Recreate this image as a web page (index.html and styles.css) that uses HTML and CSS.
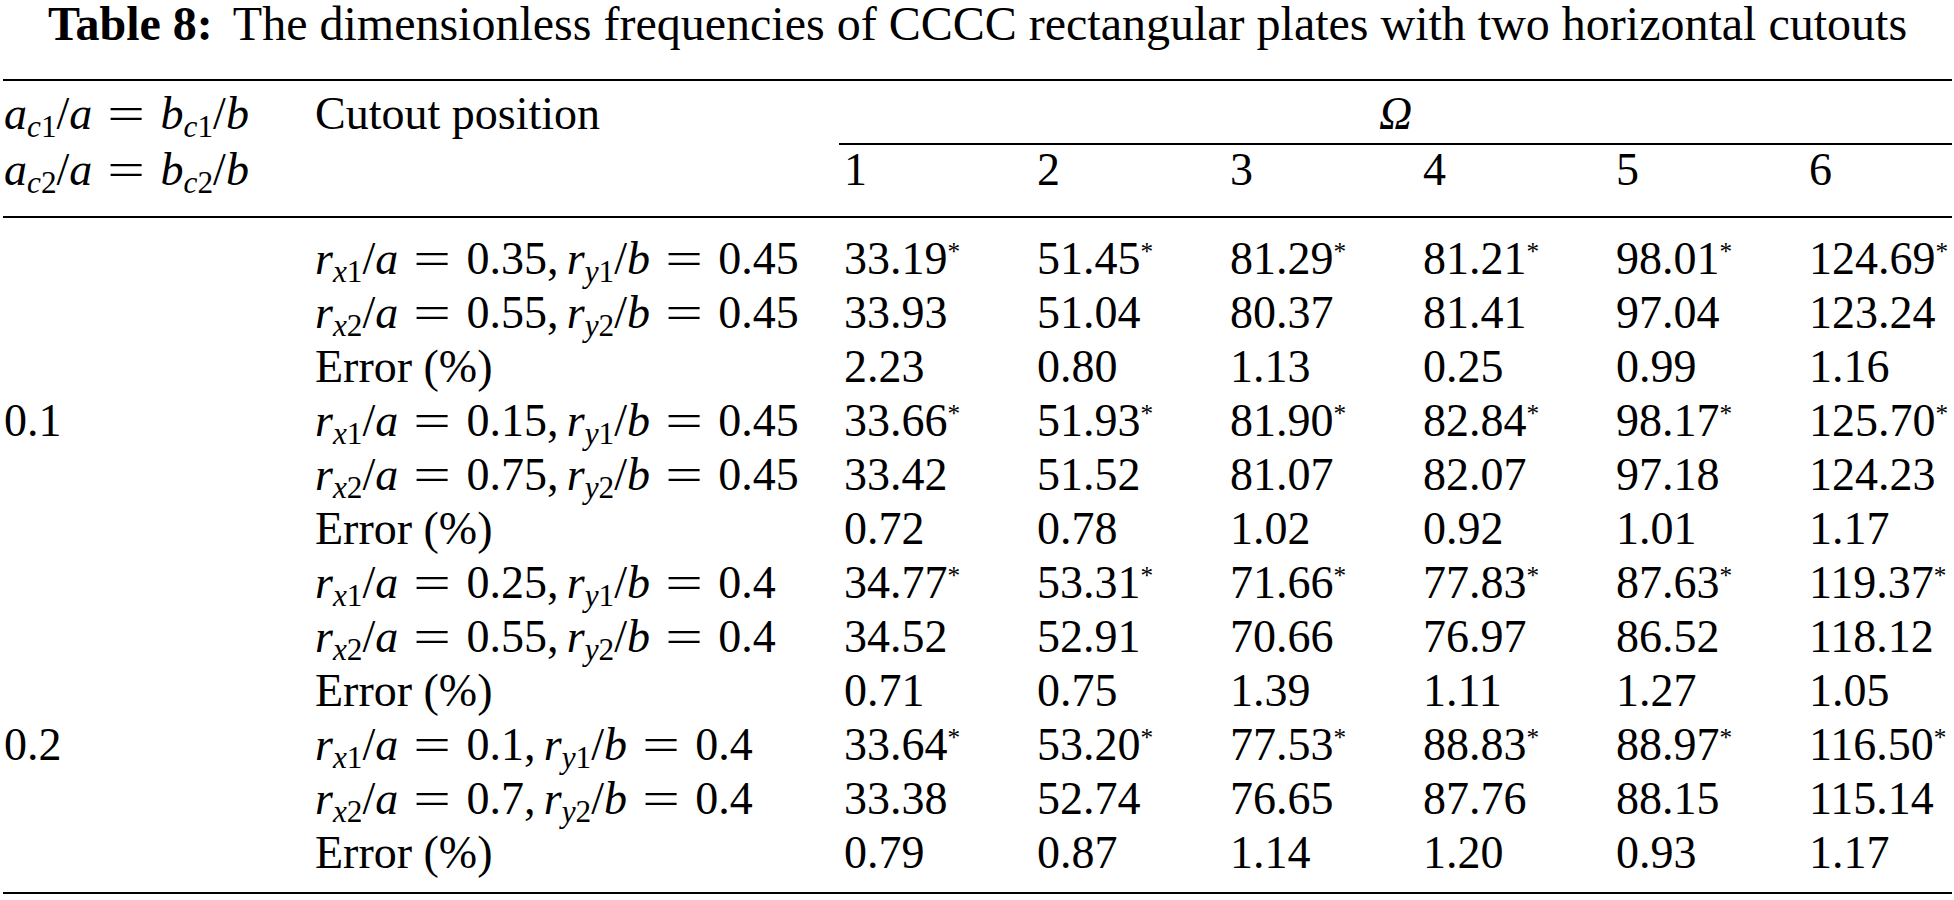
FILE: index.html
```html
<!DOCTYPE html>
<html>
<head>
<meta charset="utf-8">
<link rel="stylesheet" href="styles.css">
</head>
<body>
<div class="page">
  <div class="title"><b>Table 8:</b><span class="tgap"></span>The dimensionless frequencies of CCCC rectangular plates with two horizontal cutouts</div>
  <table class="tbl">
    <colgroup>
      <col class="c0"><col class="c1"><col class="cn"><col class="cn"><col class="cn"><col class="cn"><col class="cn"><col class="cl">
    </colgroup>
    <thead>
      <tr class="h1">
        <th class="m"><i>a</i><sub><i>c</i>1</sub>/<i>a</i><span class="eq"><span>=</span></span><i>b</i><sub><i>c</i>1</sub>/<i>b</i></th>
        <th>Cutout position</th>
        <th colspan="6" class="omega"><i>Ω</i></th>
      </tr>
      <tr class="h2">
        <th class="m"><i>a</i><sub><i>c</i>2</sub>/<i>a</i><span class="eq"><span>=</span></span><i>b</i><sub><i>c</i>2</sub>/<i>b</i></th>
        <th></th>
        <th class="n">1</th><th class="n">2</th><th class="n">3</th><th class="n">4</th><th class="n">5</th><th class="n">6</th>
      </tr>
    </thead>
    <tbody>
      <tr class="first">
        <td></td>
        <td class="m"><i>r</i><sub><i>x</i>1</sub>/<i>a</i><span class="eq"><span>=</span></span>0.35,<span class="thin"></span><i>r</i><sub><i>y</i>1</sub>/<i>b</i><span class="eq"><span>=</span></span>0.45</td>
        <td class="n">33.19<sup>*</sup></td><td class="n">51.45<sup>*</sup></td><td class="n">81.29<sup>*</sup></td><td class="n">81.21<sup>*</sup></td><td class="n">98.01<sup>*</sup></td><td class="n">124.69<sup>*</sup></td>
      </tr>
      <tr>
        <td></td>
        <td class="m"><i>r</i><sub><i>x</i>2</sub>/<i>a</i><span class="eq"><span>=</span></span>0.55,<span class="thin"></span><i>r</i><sub><i>y</i>2</sub>/<i>b</i><span class="eq"><span>=</span></span>0.45</td>
        <td class="n">33.93</td><td class="n">51.04</td><td class="n">80.37</td><td class="n">81.41</td><td class="n">97.04</td><td class="n">123.24</td>
      </tr>
      <tr>
        <td></td>
        <td>Error (%)</td>
        <td class="n">2.23</td><td class="n">0.80</td><td class="n">1.13</td><td class="n">0.25</td><td class="n">0.99</td><td class="n">1.16</td>
      </tr>
      <tr>
        <td>0.1</td>
        <td class="m"><i>r</i><sub><i>x</i>1</sub>/<i>a</i><span class="eq"><span>=</span></span>0.15,<span class="thin"></span><i>r</i><sub><i>y</i>1</sub>/<i>b</i><span class="eq"><span>=</span></span>0.45</td>
        <td class="n">33.66<sup>*</sup></td><td class="n">51.93<sup>*</sup></td><td class="n">81.90<sup>*</sup></td><td class="n">82.84<sup>*</sup></td><td class="n">98.17<sup>*</sup></td><td class="n">125.70<sup>*</sup></td>
      </tr>
      <tr>
        <td></td>
        <td class="m"><i>r</i><sub><i>x</i>2</sub>/<i>a</i><span class="eq"><span>=</span></span>0.75,<span class="thin"></span><i>r</i><sub><i>y</i>2</sub>/<i>b</i><span class="eq"><span>=</span></span>0.45</td>
        <td class="n">33.42</td><td class="n">51.52</td><td class="n">81.07</td><td class="n">82.07</td><td class="n">97.18</td><td class="n">124.23</td>
      </tr>
      <tr>
        <td></td>
        <td>Error (%)</td>
        <td class="n">0.72</td><td class="n">0.78</td><td class="n">1.02</td><td class="n">0.92</td><td class="n">1.01</td><td class="n">1.17</td>
      </tr>
      <tr>
        <td></td>
        <td class="m"><i>r</i><sub><i>x</i>1</sub>/<i>a</i><span class="eq"><span>=</span></span>0.25,<span class="thin"></span><i>r</i><sub><i>y</i>1</sub>/<i>b</i><span class="eq"><span>=</span></span>0.4</td>
        <td class="n">34.77<sup>*</sup></td><td class="n">53.31<sup>*</sup></td><td class="n">71.66<sup>*</sup></td><td class="n">77.83<sup>*</sup></td><td class="n">87.63<sup>*</sup></td><td class="n">119.37<sup>*</sup></td>
      </tr>
      <tr>
        <td></td>
        <td class="m"><i>r</i><sub><i>x</i>2</sub>/<i>a</i><span class="eq"><span>=</span></span>0.55,<span class="thin"></span><i>r</i><sub><i>y</i>2</sub>/<i>b</i><span class="eq"><span>=</span></span>0.4</td>
        <td class="n">34.52</td><td class="n">52.91</td><td class="n">70.66</td><td class="n">76.97</td><td class="n">86.52</td><td class="n">118.12</td>
      </tr>
      <tr>
        <td></td>
        <td>Error (%)</td>
        <td class="n">0.71</td><td class="n">0.75</td><td class="n">1.39</td><td class="n">1.11</td><td class="n">1.27</td><td class="n">1.05</td>
      </tr>
      <tr>
        <td>0.2</td>
        <td class="m"><i>r</i><sub><i>x</i>1</sub>/<i>a</i><span class="eq"><span>=</span></span>0.1,<span class="thin"></span><i>r</i><sub><i>y</i>1</sub>/<i>b</i><span class="eq"><span>=</span></span>0.4</td>
        <td class="n">33.64<sup>*</sup></td><td class="n">53.20<sup>*</sup></td><td class="n">77.53<sup>*</sup></td><td class="n">88.83<sup>*</sup></td><td class="n">88.97<sup>*</sup></td><td class="n">116.50<sup>*</sup></td>
      </tr>
      <tr>
        <td></td>
        <td class="m"><i>r</i><sub><i>x</i>2</sub>/<i>a</i><span class="eq"><span>=</span></span>0.7,<span class="thin"></span><i>r</i><sub><i>y</i>2</sub>/<i>b</i><span class="eq"><span>=</span></span>0.4</td>
        <td class="n">33.38</td><td class="n">52.74</td><td class="n">76.65</td><td class="n">87.76</td><td class="n">88.15</td><td class="n">115.14</td>
      </tr>
      <tr class="last">
        <td></td>
        <td>Error (%)</td>
        <td class="n">0.79</td><td class="n">0.87</td><td class="n">1.14</td><td class="n">1.20</td><td class="n">0.93</td><td class="n">1.17</td>
      </tr>
    </tbody>
  </table>
</div>
</body>
</html>
```

FILE: styles.css
```css
html, body {
  margin: 0;
  padding: 0;
  background: #ffffff;
}

.page {
  width: 1949px;
  padding-left: 3px;
  font-family: "Liberation Serif", "Times New Roman", serif;
  color: #000000;
}

.title {
  font-size: 48px;
  line-height: 48px;
  text-align: center;
  white-space: nowrap;
  margin: 0 0 31px 0;
}

.title b {
  font-weight: 700;
}

.tgap {
  display: inline-block;
  width: 20px;
}

.tbl {
  width: 1949px;
  border-collapse: separate;
  border-spacing: 0;
  table-layout: fixed;
  font-size: 46px;
  line-height: 54px;
  border-top: 2px solid #000;
  border-bottom: 2px solid #000;
}

.c0 { width: 312px; }
.c1 { width: 524px; }
.cn { width: 193px; }
.cl { width: 148px; }

.tbl th,
.tbl td {
  font-weight: 400;
  text-align: left;
  padding: 0;
  white-space: nowrap;
  vertical-align: top;
}

.tbl th:first-child,
.tbl td:first-child {
  padding-left: 1px;
}

.tbl thead th {
  line-height: 48px;
}

.tbl thead tr.h1 th {
  padding-top: 9px;
  padding-bottom: 5px;
}

.tbl thead tr.h2 th {
  padding-top: 1px;
  padding-bottom: 22px;
  border-bottom: 2px solid #000;
}

.tbl .omega {
  text-align: center;
  border-bottom: 2px solid #000;
}

.tbl .n {
  padding-left: 5px;
}

.tbl tbody tr.first td {
  padding-top: 14px;
}

.tbl tbody tr.last td {
  padding-bottom: 12px;
}

.m i,
.omega i {
  font-style: italic;
}

sub {
  font-size: 0.68em;
  vertical-align: -0.24em;
  line-height: 0;
}

sup {
  font-size: 0.55em;
  vertical-align: 0.55em;
  line-height: 0;
}

.eq {
  display: inline-block;
  padding: 0 0.46em;
}

.eq span {
  display: inline-block;
  transform: scaleX(1.45);
}

.thin {
  display: inline-block;
  width: 0.18em;
}
```
